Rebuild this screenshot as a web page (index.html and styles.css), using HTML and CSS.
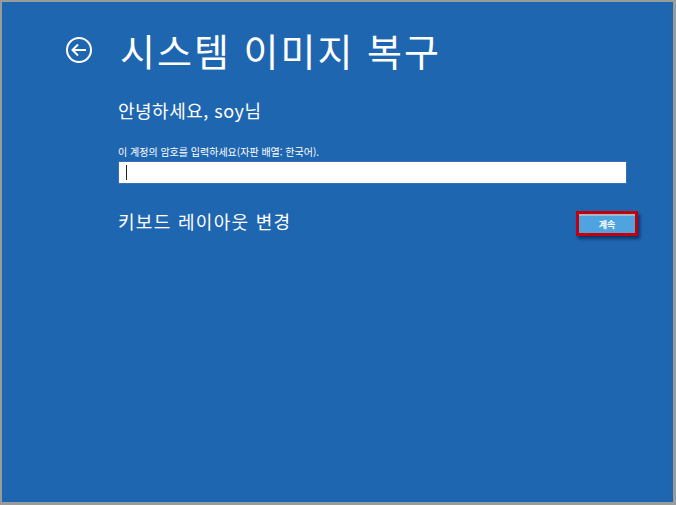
FILE: index.html
```html
<!DOCTYPE html>
<html lang="ko">
<head>
    <meta charset="UTF-8">
    <title>시스템 이미지 복구</title>
    <link rel="stylesheet" href="styles.css">
</head>
<body>
    <div class="screen">
        <header class="title-row">
            <span class="back-btn">
                <svg width="28" height="28" viewBox="0 0 28 28">
                    <circle cx="14" cy="14" r="12" fill="none" stroke="#fff" stroke-width="2"/>
                    <path d="M21 14H8M13 8.5L7.5 14L13 19.5" fill="none" stroke="#fff" stroke-width="2"/>
                </svg>
            </span>
            <h1>시스템 이미지 복구</h1>
        </header>

        <section class="content">
            <h2 class="greeting">안녕하세요, soy님</h2>
            <label class="pw-label" for="password">이 계정의 암호를 입력하세요(자판 배열: 한국어).</label>
            <div class="pw-box">
                <span class="caret"></span>
            </div>

            <div class="action-row">
                <span class="keyboard-link">키보드 레이아웃 변경</span>
                <span class="btn-frame">
                    <button class="continue-btn">계속</button>
                </span>
            </div>
        </section>
    </div>
</body>
</html>
```

FILE: styles.css
```css
* {
    margin: 0;
    padding: 0;
    box-sizing: border-box;
}

body {
    width: 676px;
    height: 505px;
    overflow: hidden;
    font-family: "Noto Sans CJK KR", "Noto Sans", sans-serif;
    color: #ffffff;
}

.screen {
    width: 676px;
    height: 505px;
    background-color: #1f66b1;
    border: 2px solid #9b9b9b;
    border-right-width: 3px;
    border-bottom-width: 3px;
}

.title-row {
    display: flex;
    align-items: center;
    padding: 20px 0 0 63px;
    height: 76px;
}

.back-btn {
    display: flex;
    width: 28px;
    height: 28px;
}

.title-row h1 {
    margin-left: 27px;
    font-size: 38px;
    font-weight: 400;
    letter-spacing: 2px;
    line-height: 1;
}

.content {
    padding: 20px 0 0 116px;
    width: 626px;
}

.greeting {
    font-size: 18px;
    font-weight: 400;
    line-height: 24px;
    letter-spacing: 0.5px;
}

.pw-label {
    display: block;
    margin-top: 23px;
    font-size: 10px;
    line-height: 14px;
}

.pw-box {
    margin-top: 2px;
    width: 509px;
    height: 23px;
    background: #ffffff;
    border: 1px solid #3a6fb8;
    display: flex;
    align-items: center;
    padding-left: 7px;
}

.caret {
    width: 1px;
    height: 15px;
    background: #222;
}

.action-row {
    display: flex;
    justify-content: space-between;
    align-items: flex-start;
    margin-top: 25px;
    width: 520px;
}

.keyboard-link {
    font-size: 18px;
    line-height: 24px;
    letter-spacing: 1.3px;
}

.btn-frame {
    margin-top: 2px;
    display: block;
    border: 3px solid #c1000c;
    box-shadow: 2px 3px 3px rgba(0, 20, 60, 0.6);
}

.continue-btn {
    display: block;
    width: 56px;
    height: 19px;
    border: none;
    border-top: 2px solid #a9b7c4;
    background: #4fa3de;
    color: #ffffff;
    font-family: inherit;
    font-size: 9px;
    font-weight: 700;
}
```
